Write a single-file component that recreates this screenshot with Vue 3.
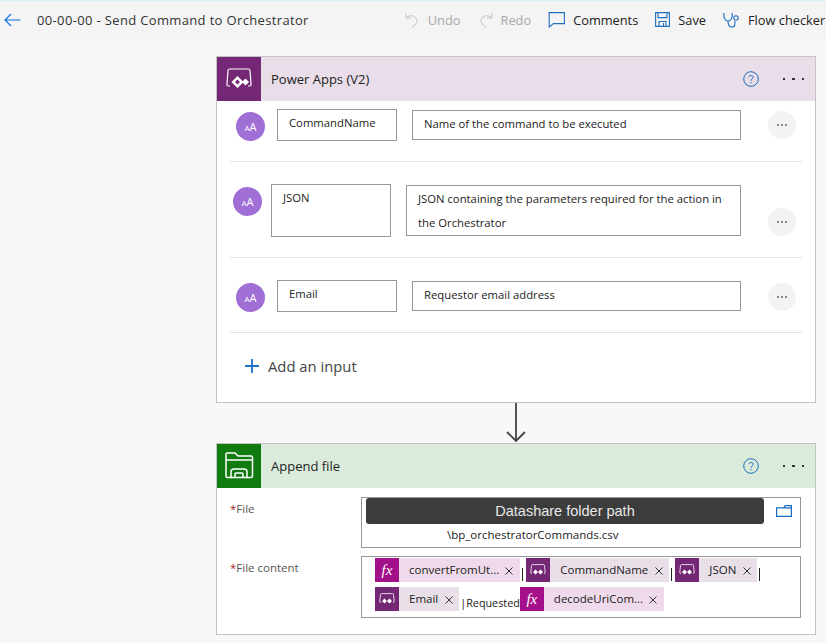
<script setup>
const inputs = [
  { name: "CommandName", desc: ["Name of the command to be executed"], kind: "first" },
  { name: "JSON", desc: ["JSON containing the parameters required for the action in", "the Orchestrator"], kind: "tall" },
  { name: "Email", desc: ["Requestor email address"], kind: "last" },
];
</script>

<template>
  <div class="page">
    <header class="toolbar">
      <svg class="back" width="17" height="14" viewBox="0 0 17 14" fill="none" stroke="#0b6ce0" stroke-width="1.100">
        <path d="M16.5 7H1M7 1L1 7l6 6" />
      </svg>
      <span class="flow-title">00-00-00 - Send Command to Orchestrator</span>
      <div class="actions">
        <span class="action off undo">
          <svg width="15" height="16" viewBox="0 0 15 16" fill="none" stroke="#c4c4c4">
            <path d="M1 1v5h5M1 6c3-3 8-3 10 0s1 6-4 9" />
          </svg>
          Undo
        </span>
        <span class="action off redo">
          <svg width="15" height="16" viewBox="0 0 15 16" fill="none" stroke="#c4c4c4">
            <path d="M14 1v5H9M14 6c-3-3-8-3-10 0s-1 6 4 9" />
          </svg>
          Redo
        </span>
        <span class="action comments">
          <svg width="17" height="16" viewBox="0 0 17 16" fill="none" stroke="#1f6fc0" stroke-width="1.100">
            <path d="M.6.6h15.800v11H5.500L1.200 15V.6" />
          </svg>
          Comments
        </span>
        <span class="action save">
          <svg width="15" height="15" viewBox="0 0 15 15" fill="none" stroke="#1f6fc0" stroke-width="1.100">
            <path d="M.6.6h13.800v13.800H.6zM3 .6v5h9v-5M4 14.400V9.500h7v4.900M8.500 11v3" />
          </svg>
          Save
        </span>
        <span class="action checker">
          <svg width="17" height="16" viewBox="0 0 17 16" fill="none" stroke="#1f6fc0" stroke-width="1.100">
            <path d="M1 1C.3 5 2 9 5 9s5-4 4-8M5 9c0 4 1 6 4 6s3-2 3-6" />
            <circle cx="13" cy="6" r="2.200" />
          </svg>
          Flow checker
        </span>
      </div>
    </header>

    <main class="canvas">
      <section class="card">
        <div class="card-head purple">
          <div class="brand purple-icon">
            <svg width="28" height="24" viewBox="0 0 28 24" fill="none">
              <path d="M5 19H3.500Q1.500 19 2 17L3 3.500Q3.100 2 5 2h18q1.900 0 2 1.500L26 17q.5 2-1.500 2H23" stroke="#fff" stroke-width="1.200" />
              <path d="M12.500 9l6 6-6 6-6-6zM12.500 12.500L10 15l2.500 2.500L15 15z" fill="#fff" fill-rule="evenodd" />
              <path d="M20.500 11.500l3.500 3.500-3.500 3.500L17 15z" fill="#fff" />
            </svg>
          </div>
          <span class="card-title">Power Apps (V2)</span>
          <svg class="help" width="16" height="16" viewBox="0 0 16 16" fill="none" stroke="#1f6fc0">
            <circle cx="8" cy="8" r="7.300" />
            <path d="M5.800 6.200C6 4 10.200 4 10.200 6.200 10.200 8 8 7.800 8 9.800M8 11v1.200" />
          </svg>
          <span class="dots"><i></i><i></i><i></i></span>
        </div>

        <div class="inputs">
          <div v-for="item in inputs" :key="item.name" class="input-row" :class="item.kind">
            <div class="avatar"><span class="small-a">A</span><span>A</span></div>
            <div class="name-box">{{ item.name }}</div>
            <div class="desc-box">
              <div v-for="line in item.desc" :key="line">{{ line }}</div>
            </div>
            <div class="more"><i></i><i></i><i></i></div>
          </div>
          <div class="add-input">
            <svg width="14" height="14" viewBox="0 0 14 14" stroke="#1f6fc0" stroke-width="1.800">
              <path d="M7 0v14M0 7h14" />
            </svg>
            <span>Add an input</span>
          </div>
        </div>
      </section>

      <div class="connector">
        <svg width="22" height="40" viewBox="0 0 22 40" fill="none" stroke="#444" stroke-width="1.800">
          <path d="M11 0v38M2 29l9 9 9-9" />
        </svg>
      </div>

      <section class="card second">
        <div class="card-head green">
          <div class="brand green-icon">
            <svg width="30" height="30" viewBox="0 0 30 30" fill="none" stroke="#fff" stroke-width="1.500">
              <path d="M2 9V3.500Q2 2 3.500 2H11l3 3h13q1.500 0 1.500 1.500V9z" />
              <path d="M2 9v16q0 1.500 1.500 1.500H7V21q0-3 3-3h10q3 0 3 3v5.500h4q1.500 0 1.500-1.500V9" />
              <path d="M11 26.500V23q0-1 1-1h6q1 0 1 1v3.500zM7 26.500h16" />
            </svg>
          </div>
          <span class="card-title">Append file</span>
          <svg class="help" width="16" height="16" viewBox="0 0 16 16" fill="none" stroke="#1f6fc0">
            <circle cx="8" cy="8" r="7.300" />
            <path d="M5.800 6.200C6 4 10.200 4 10.200 6.200 10.200 8 8 7.800 8 9.800M8 11v1.200" />
          </svg>
          <span class="dots"><i></i><i></i><i></i></span>
        </div>

        <div class="fields">
          <div class="field">
            <label class="field-label"><b>*</b>File</label>
            <div class="file-box">
              <div class="masked">Datashare folder path</div>
              <svg class="folder" width="16" height="12" viewBox="0 0 16 12" fill="none" stroke="#1a6dc4" stroke-width="1.200">
                <path d="M.6 2.800h7.400L9 .6h6.400v10.800H.6zM8 2.800h7.400" />
              </svg>
              <div class="file-name">\bp_orchestratorCommands.csv</div>
            </div>
          </div>
          <div class="field content-field">
            <label class="field-label"><b>*</b>File content</label>
            <div class="content-box">
              <span class="token fn">
                <span class="token-icon"><em>fx</em></span>
                <span class="token-text">convertFromUt...</span>
                <svg class="x" width="8" height="8" viewBox="0 0 8 8" stroke="#333"><path d="M.5.5l7 7M7.500.5l-7 7" /></svg>
              </span>
              <span class="caret"></span>
              <span class="token pa">
                <span class="token-icon">
                  <svg width="16" height="12" viewBox="0 0 16 12" fill="none">
                    <path d="M2 9.500Q.5 9.500 .8 8L1.500 1.500Q1.600.6 2.500.6h11q.9 0 1 .9l.7 6.500q.3 1.500-1.200 1.500" stroke="#fff" stroke-width=".8" />
                    <path d="M5.500 5.500l2.500 2.500L5.500 10.500 3 8zM10.500 5.500L13 8l-2.500 2.500L8 8z" fill="#fff" />
                  </svg>
                </span>
                <span class="token-text">CommandName</span>
                <svg class="x" width="8" height="8" viewBox="0 0 8 8" stroke="#333"><path d="M.5.5l7 7M7.500.5l-7 7" /></svg>
              </span>
              <span class="caret"></span>
              <span class="token pa">
                <span class="token-icon">
                  <svg width="16" height="12" viewBox="0 0 16 12" fill="none">
                    <path d="M2 9.500Q.5 9.500 .8 8L1.500 1.500Q1.600.6 2.500.6h11q.9 0 1 .9l.7 6.500q.3 1.500-1.200 1.500" stroke="#fff" stroke-width=".8" />
                    <path d="M5.500 5.500l2.500 2.500L5.500 10.500 3 8zM10.500 5.500L13 8l-2.500 2.500L8 8z" fill="#fff" />
                  </svg>
                </span>
                <span class="token-text">JSON</span>
                <svg class="x" width="8" height="8" viewBox="0 0 8 8" stroke="#333"><path d="M.5.5l7 7M7.500.5l-7 7" /></svg>
              </span>
              <span class="caret"></span>
              <span class="token pa">
                <span class="token-icon">
                  <svg width="16" height="12" viewBox="0 0 16 12" fill="none">
                    <path d="M2 9.500Q.5 9.500 .8 8L1.500 1.500Q1.600.6 2.500.6h11q.9 0 1 .9l.7 6.500q.3 1.500-1.200 1.500" stroke="#fff" stroke-width=".8" />
                    <path d="M5.500 5.500l2.500 2.500L5.500 10.500 3 8zM10.500 5.500L13 8l-2.500 2.500L8 8z" fill="#fff" />
                  </svg>
                </span>
                <span class="token-text">Email</span>
                <svg class="x" width="8" height="8" viewBox="0 0 8 8" stroke="#333"><path d="M.5.5l7 7M7.500.5l-7 7" /></svg>
              </span>
              <span class="plain">|Requested</span>
              <span class="token fn">
                <span class="token-icon"><em>fx</em></span>
                <span class="token-text">decodeUriCom...</span>
                <svg class="x" width="8" height="8" viewBox="0 0 8 8" stroke="#333"><path d="M.5.5l7 7M7.500.5l-7 7" /></svg>
              </span>
            </div>
          </div>
        </div>
      </section>
    </main>
  </div>
</template>

<style>
html,
body {
  margin: 0;
  background: #f8f8f8;
}
</style>

<style scoped>
.page {
  width: 826px;
  height: 643px;
  overflow: hidden;
  background: #f8f8f8;
  font-family: "Open Sans", "Noto Sans", sans-serif;
  color: #222;
}

.toolbar {
  display: flex;
  align-items: center;
  box-sizing: border-box;
  height: 40px;
  padding-bottom: 2px;
  background: #f4f4f4;
  border-top: 1px solid #d3f5fb;
  white-space: nowrap;
}

.back,
.flow-title,
.actions,
.action {
  flex: none;
}

.back {
  margin-left: 4px;
}

.flow-title {
  margin-left: 16px;
  font-size: 13px;
  letter-spacing: 0.35px;
  color: #333;
}

.actions {
  display: flex;
  align-items: center;
  margin-left: 96px;
  font-size: 12.800px;
}

.action {
  display: flex;
  align-items: center;
  gap: 8px;
  margin-right: 17px;
}

.action.off {
  color: #a8a8a8;
}

.card {
  width: 598px;
  height: 345px;
  margin-left: 216px;
  background: #fff;
  border: 1px solid #c4c4c4;
}

.second {
  height: 190px;
}

.canvas {
  padding-top: 16px;
}

.card-head {
  display: flex;
  align-items: center;
  height: 44px;
}

.purple {
  background: #e8dde9;
}

.green {
  background: #dbebdb;
}

.brand {
  display: flex;
  align-items: center;
  justify-content: center;
  width: 44px;
  height: 44px;
}

.purple-icon {
  background: #742774;
}

.green-icon {
  background: #107c10;
}

.card-title {
  flex: 1;
  margin-left: 10px;
  font-size: 13px;
  color: #222;
}

.help {
  margin-right: 24px;
}

.dots {
  display: flex;
  gap: 7px;
  margin-right: 11px;
}

.dots i {
  width: 2.500px;
  height: 2.500px;
  background: #333;
}

.inputs {
  padding: 0 13px;
}

.input-row {
  display: flex;
  align-items: flex-start;
  border-bottom: 1px solid #e2e2e2;
  box-sizing: border-box;
  font-size: 11.300px;
}

.first {
  height: 61px;
  padding-top: 8px;
}

.tall {
  height: 96px;
  padding-top: 22px;
}

.last {
  height: 75px;
  padding-top: 22px;
}

.avatar {
  display: flex;
  align-items: baseline;
  justify-content: center;
  flex: none;
  width: 29px;
  height: 29px;
  margin: 3px 12px 0 6px;
  border-radius: 50%;
  background: #a06fd6;
  color: #fff;
  font-size: 11px;
  line-height: 29px;
}

.small-a {
  font-size: 8px;
}

.name-box {
  box-sizing: border-box;
  width: 120px;
  height: 32px;
  padding: 5px 11px;
  background: #fff;
  border: 1px solid #979797;
}

.desc-box {
  box-sizing: border-box;
  width: 329px;
  height: 30px;
  margin: 1px 0 0 15px;
  padding: 0 11px;
  background: #fff;
  border: 1px solid #979797;
  line-height: 26px;
}

.tall .avatar {
  margin: 3px 9px 0 3px;
}

.tall .name-box {
  height: 53px;
}

.tall .desc-box {
  width: 335px;
  height: 51px;
  padding-top: 1px;
  line-height: 24px;
}

.more {
  display: flex;
  align-items: center;
  justify-content: center;
  gap: 2px;
  width: 28px;
  height: 28px;
  margin: 2px 6px 0 auto;
  border-radius: 50%;
  background: #f3f3f3;
}

.more i {
  width: 2px;
  height: 2px;
  border-radius: 50%;
  background: #666;
}

.tall .more {
  margin-top: 24px;
}

.last .more {
  margin-top: 3px;
}

.add-input {
  display: flex;
  align-items: center;
  gap: 9px;
  margin: 23px 0 0 15px;
  font-size: 14.800px;
  color: #444;
}

.connector {
  display: flex;
  height: 40px;
  margin-left: 505px;
}

.fields {
  padding: 9px 14px 0 13px;
  font-size: 11.500px;
}

.field {
  display: flex;
  align-items: flex-start;
}

.field-label {
  width: 131px;
  padding-top: 4px;
  color: #555;
}

.field-label b {
  font-weight: 400;
  color: #a4262c;
}

.file-box {
  position: relative;
  box-sizing: border-box;
  width: 440px;
  height: 51px;
  padding: 0 0 0 4px;
  background: #fff;
  border: 1px solid #979797;
}

.masked {
  box-sizing: border-box;
  width: 398px;
  height: 26px;
  border-radius: 3px;
  background: #3c3c3c;
  color: #e8e8e8;
  font-family: "Liberation Sans", Arial, sans-serif;
  font-size: 14.500px;
  line-height: 26px;
  text-align: center;
}

.folder {
  position: absolute;
  top: 7px;
  right: 8px;
}

.file-name {
  margin: 3px 0 0 81px;
  line-height: 16px;
}

.content-field {
  margin-top: 8px;
}

.content-box {
  display: flex;
  flex-wrap: wrap;
  align-items: flex-start;
  align-content: flex-start;
  row-gap: 5px;
  box-sizing: border-box;
  width: 440px;
  height: 62px;
  padding: 1px 0 0 13px;
  background: #fff;
  border: 1px solid #979797;
}

.token {
  display: inline-flex;
  align-items: center;
  height: 24px;
}

.fn {
  background: #eedaea;
}

.pa {
  background: #e8dfe8;
}

.token-icon {
  display: flex;
  align-items: center;
  justify-content: center;
  flex: none;
  width: 24px;
  height: 24px;
}

.fn .token-icon {
  background: #a4108a;
  color: #fff;
  font-family: "Liberation Serif", serif;
  font-size: 15px;
}

.pa .token-icon {
  background: #742774;
}

.token-text {
  margin-left: 10px;
  padding-bottom: 2px;
}

.x {
  margin: 1px 7px 0 6px;
}

.pa .x {
  margin-left: 7px;
  margin-right: 6px;
}

.caret {
  width: 1px;
  height: 13px;
  margin: 10px 3px 0 2px;
  background: #222;
}

.plain {
  margin: 7px 0 0 1px;
  font-size: 10.800px;
  line-height: 18px;
}
</style>
